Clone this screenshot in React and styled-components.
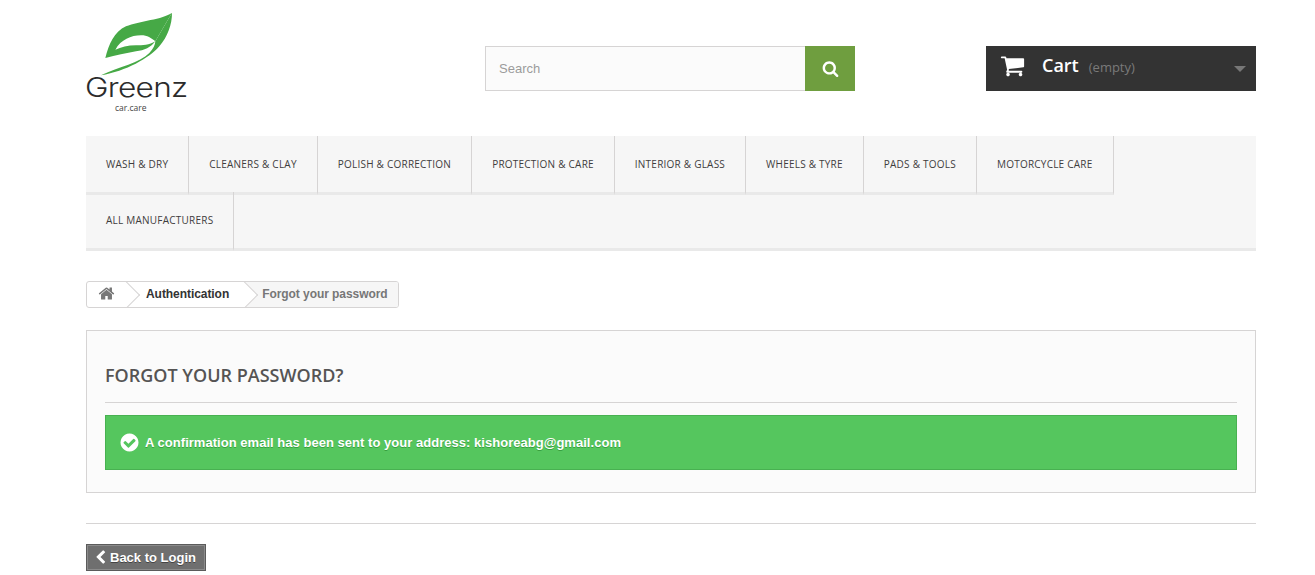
import React from "react";
import styled, { createGlobalStyle } from "styled-components";

const PATHS = {
  home: "M1472 992v480q0 26-19 45t-45 19h-384v-384h-256v384h-384q-26 0-45-19t-19-45v-480q0-1 .5-3t.5-3l575-474 575 474q1 2 1 6zm223-69l-62 74q-8 9-21 11h-3q-13 0-21-7l-692-577-692 577q-12 8-24 7-13-2-21-11l-62-74q-8-10-7-23.5t11-21.5l719-599q32-26 76-26t76 26l244 204v-195q0-14 9-23t23-9h192q14 0 23 9t9 23v408l219 182q10 8 11 21.5t-7 23.5z",
  cart: "M704 1536q0 52-38 90t-90 38-90-38-38-90 38-90 90-38 90 38 38 90zm896 0q0 52-38 90t-90 38-90-38-38-90 38-90 90-38 90 38 38 90zm128-1088v512q0 24-16.5 42.5t-40.5 21.5l-1044 122q13 60 13 70 0 16-24 64h920q26 0 45 19t19 45-19 45-45 19h-1024q-26 0-45-19t-19-45q0-11 8-31.5t16-36 21.5-40 15.5-29.5l-177-823h-204q-26 0-45-19t-19-45 19-45 45-19h256q16 0 28.5 6.5t19.5 15.5 13 24.5 8 26 5.5 29.5 4.5 26h1201q26 0 45 19t19 45z",
  search: "M1216 832q0-185-131.5-316.5t-316.5-131.5-316.5 131.5-131.5 316.5 131.5 316.5 316.5 131.5 316.5-131.5 131.5-316.5zm512 832q0 52-38 90t-90 38q-54 0-90-38l-343-342q-179 124-399 124-143 0-273.5-55.5t-225-150-150-225-55.5-273.5 55.5-273.5 150-225 225-150 273.5-55.5 273.5 55.5 225 150 150 225 55.5 273.5q0 220-124 399l343 343q37 37 37 90z",
  check: "M1412 734q0-28-18-46l-91-90q-19-19-45-19t-45 19l-408 407-226-226q-19-19-45-19t-45 19l-91 90q-18 18-18 46 0 27 18 45l362 362q19 19 45 19 27 0 46-19l543-543q18-18 18-45zm252 162q0 209-103 385.5t-279.5 279.5-385.5 103-385.5-103-279.5-279.5-103-385.5 103-385.5 279.5-279.5 385.5-103 385.5 103 279.5 279.5 103 385.5z",
  chevron: "M1427 301l-531 531 531 531q19 19 19 45t-19 45l-166 166q-19 19-45 19t-45-19l-742-742q-19-19-19-45t19-45l742-742q19-19 45-19t45 19l166 166q19 19 19 45t-19 45z",
};

const IconSvg = styled.svg`
  display: block;
  flex: none;
  width: ${p => p.$size}px;
  height: ${p => p.$size}px;
  fill: currentColor;
  margin: ${p => p.$margin || 0};
`;
const Icon = ({ name, size, margin }) => (
  <IconSvg viewBox="0 0 1792 1792" $size={size} $margin={margin}>
    <path d={PATHS[name]} />
  </IconSvg>
);

const Global = createGlobalStyle`
  html, body { margin: 0; padding: 0; background: #fff; overflow: hidden; }
  * { box-sizing: border-box; }
  body { font-family: Arial, "Liberation Sans", sans-serif; }
`;
const Page = styled.div`
  width: 1170px;
  margin-left: 86px;
`;
const Header = styled.header`
  height: 136px;
  display: flex;
  align-items: flex-start;
  padding-top: 46px;
`;
const LogoSlot = styled.div`
  width: 399px;
  height: 90px;
  position: relative;
`;
const LogoBox = styled.div`
  position: absolute;
  left: 0;
  top: -38px;
  width: 104px;
  height: 110px;
`;
const LeafSvg = styled.svg`
  display: block;
  margin-left: 10px;
`;
const LogoWord = styled.div`
  position: absolute;
  left: -1px;
  top: 67px;
  font-family: Inter, sans-serif;
  font-weight: 300;
  font-size: 27px;
  line-height: 26px;
  letter-spacing: -0.6px;
  color: #2b2b2b;
  transform: scaleX(1.17);
  transform-origin: left;
`;
const LogoSub = styled.div`
  position: absolute;
  left: 29px;
  top: 94px;
  font-family: "Open Sans", sans-serif;
  font-size: 8.5px;
  line-height: 12px;
  color: #444;
`;
const SearchForm = styled.form`
  width: 370px;
  height: 45px;
  display: flex;
`;
const SearchInput = styled.input`
  flex: 1;
  min-width: 0;
  height: 45px;
  border: 1px solid #d6d4d4;
  border-right: 0;
  background: #fbfbfb;
  padding: 0 13px;
  font-family: Arial, "Liberation Sans", sans-serif;
  font-size: 13px;
  color: #9c9b9b;
  outline: none;
  &::placeholder { color: #9c9b9b; opacity: 1; }
`;
const SearchBtn = styled.button`
  width: 50px;
  height: 45px;
  border: 0;
  padding: 0;
  background: #6f9e3f;
  color: #fff;
  display: flex;
  align-items: center;
  justify-content: center;
`;
const Cart = styled.div`
  margin-left: 131px;
  width: 270px;
  height: 45px;
  background: #333;
  display: flex;
  align-items: center;
  position: relative;
  padding-left: 14px;
  color: #fff;
`;
const CartTitle = styled.span`
  margin-left: 17px;
  font-family: "Open Sans", sans-serif;
  font-weight: 600;
  font-size: 18px;
  line-height: 25px;
  margin-top: -7px;
`;
const CartEmpty = styled.span`
  margin-left: 10px;
  margin-top: -4px;
  font-family: "Open Sans", sans-serif;
  font-size: 13px;
  color: #7a7a7a;
  font-weight: 400;
`;
const Caret = styled.span`
  position: absolute;
  right: 10px;
  top: 20px;
  border-style: solid;
  border-width: 6px 6px 0;
  border-color: #777 transparent transparent;
`;
const Nav = styled.nav`
  background: #f6f6f6;
  border-bottom: 3px solid #e9e9e9;
  display: flex;
  flex-wrap: wrap;
  align-content: flex-start;
  height: 115px;
`;
const NavItem = styled.a`
  height: 59px;
  margin-bottom: -3px;
  padding: 0 20px;
  display: flex;
  align-items: center;
  border-right: 1px solid #d6d4d4;
  border-bottom: 3px solid #e9e9e9;
  font-family: "Open Sans", sans-serif;
  font-weight: 500;
  font-size: 10px;
  letter-spacing: 0.23px;
  color: #3f3d3d;
  text-transform: uppercase;
  white-space: nowrap;
`;
const NavBreak = styled.div`
  flex-basis: 100%;
  height: 0;
`;
const CrumbRow = styled.div`
  height: 79px;
  padding-top: 30px;
`;
const Crumbs = styled.div`
  display: inline-flex;
  height: 27px;
  border: 1px solid #d6d4d4;
  border-radius: 3px;
  overflow: hidden;
  font-size: 12px;
  font-weight: 700;
  line-height: 25px;
  letter-spacing: -0.06px;
  vertical-align: top;
`;
const CrumbHome = styled.a`
  width: 39px;
  padding-left: 11px;
  display: flex;
  align-items: center;
  color: #777;
  padding-bottom: 3px;
`;
const Crumb = styled.a`
  position: relative;
  color: ${p => p.$current ? "#777" : "#333"};
  background: ${p => p.$current ? "#f6f6f6" : "transparent"};
  padding: ${p => p.$current ? "0 10px 0 18px" : "0 15px 0 20px"};
  white-space: nowrap;
  &::before {
    content: "";
    position: absolute;
    left: -10px;
    top: 3px;
    width: 19px;
    height: 19px;
    background: ${p => p.$current ? "#fff" : "transparent"};
    border-top: 1px solid #d6d4d4;
    border-right: 1px solid #d6d4d4;
    transform: rotate(45deg);
  }
`;
const CrumbLabel = styled.span`
  position: relative;
`;
const Panel = styled.section`
  height: 163px;
  background: #fbfbfb;
  border: 1px solid #d6d4d4;
  padding: 26px 18px 0;
`;
const Title = styled.h1`
  margin: 0 0 12px;
  height: 46px;
  border-bottom: 1px solid #d6d4d4;
  font-family: "Open Sans", sans-serif;
  font-weight: 600;
  font-size: 18px;
  line-height: 37px;
  color: #555454;
  text-transform: uppercase;
`;
const Alert = styled.div`
  height: 55px;
  background: #55c65e;
  border: 1px solid #48b151;
  padding-left: 13px;
  display: flex;
  align-items: center;
  color: #fff;
  font-size: 13px;
  font-weight: 700;
  letter-spacing: 0.03px;
  text-shadow: 0 1px #38a040;
`;
const Rule = styled.hr`
  margin: 30px 0 20px;
  border: 0;
  border-top: 1px solid #d6d4d4;
`;
const BackBtn = styled.a`
  width: 120px;
  height: 27px;
  background: #6f6f6f;
  border: 1px solid #5b5b5b;
  box-shadow: inset 0 0 0 1px #8b8b8b;
  display: flex;
  align-items: center;
  padding-left: 6px;
  color: #fff;
  font-size: 13px;
  font-weight: 700;
  text-shadow: 0 1px #444;
`;

const items = ["Wash & Dry", "Cleaners & Clay", "Polish & Correction", "Protection & Care", "Interior & Glass", "Wheels & Tyre", "Pads & Tools", "Motorcycle Care"];

export default function App() {
  return (
    <Page>
      <Global />
      <Header>
        <LogoSlot>
          <LogoBox>
            <LeafSvg width="84" height="72" viewBox="0 0 252 216">
              <path fill="#46a946" d="M228 14 C200 35 130 38 90 55 C55 70 38 110 28 150 C60 142 90 136 120 130 C145 128 165 118 178 100 C160 112 140 112 120 112 C95 112 75 118 58 125 C75 95 105 82 135 82 C155 82 165 90 178 100 L228 14 Z" />
              <path fill="#46a946" d="M228 14 C228 50 215 85 190 115 C160 150 90 190 15 202 C70 176 130 165 160 135 C172 122 178 110 178 100 Z" />
            </LeafSvg>
            <LogoWord>Greenz</LogoWord>
            <LogoSub>car.care</LogoSub>
          </LogoBox>
        </LogoSlot>
        <SearchForm>
          <SearchInput placeholder="Search" />
          <SearchBtn type="button"><Icon name="search" size={17} /></SearchBtn>
        </SearchForm>
        <Cart>
          <Icon name="cart" size={25} margin="-6px 0 0" />
          <CartTitle>Cart</CartTitle>
          <CartEmpty>(empty)</CartEmpty>
          <Caret />
        </Cart>
      </Header>
      <Nav>
        {items.map(i => <NavItem key={i}>{i}</NavItem>)}
        <NavBreak />
        <NavItem>All Manufacturers</NavItem>
      </Nav>
      <CrumbRow>
        <Crumbs>
          <CrumbHome><Icon name="home" size={17} /></CrumbHome>
          <Crumb><CrumbLabel>Authentication</CrumbLabel></Crumb>
          <Crumb $current><CrumbLabel>Forgot your password</CrumbLabel></Crumb>
        </Crumbs>
      </CrumbRow>
      <Panel>
        <Title>Forgot your password?</Title>
        <Alert><Icon name="check" size={21} margin="0 5px 0 0" />A confirmation email has been sent to your address: kishoreabg@gmail.com</Alert>
      </Panel>
      <Rule />
      <BackBtn><Icon name="chevron" size={15} margin="0 2px 0 0" />Back to Login</BackBtn>
    </Page>
  );
}
